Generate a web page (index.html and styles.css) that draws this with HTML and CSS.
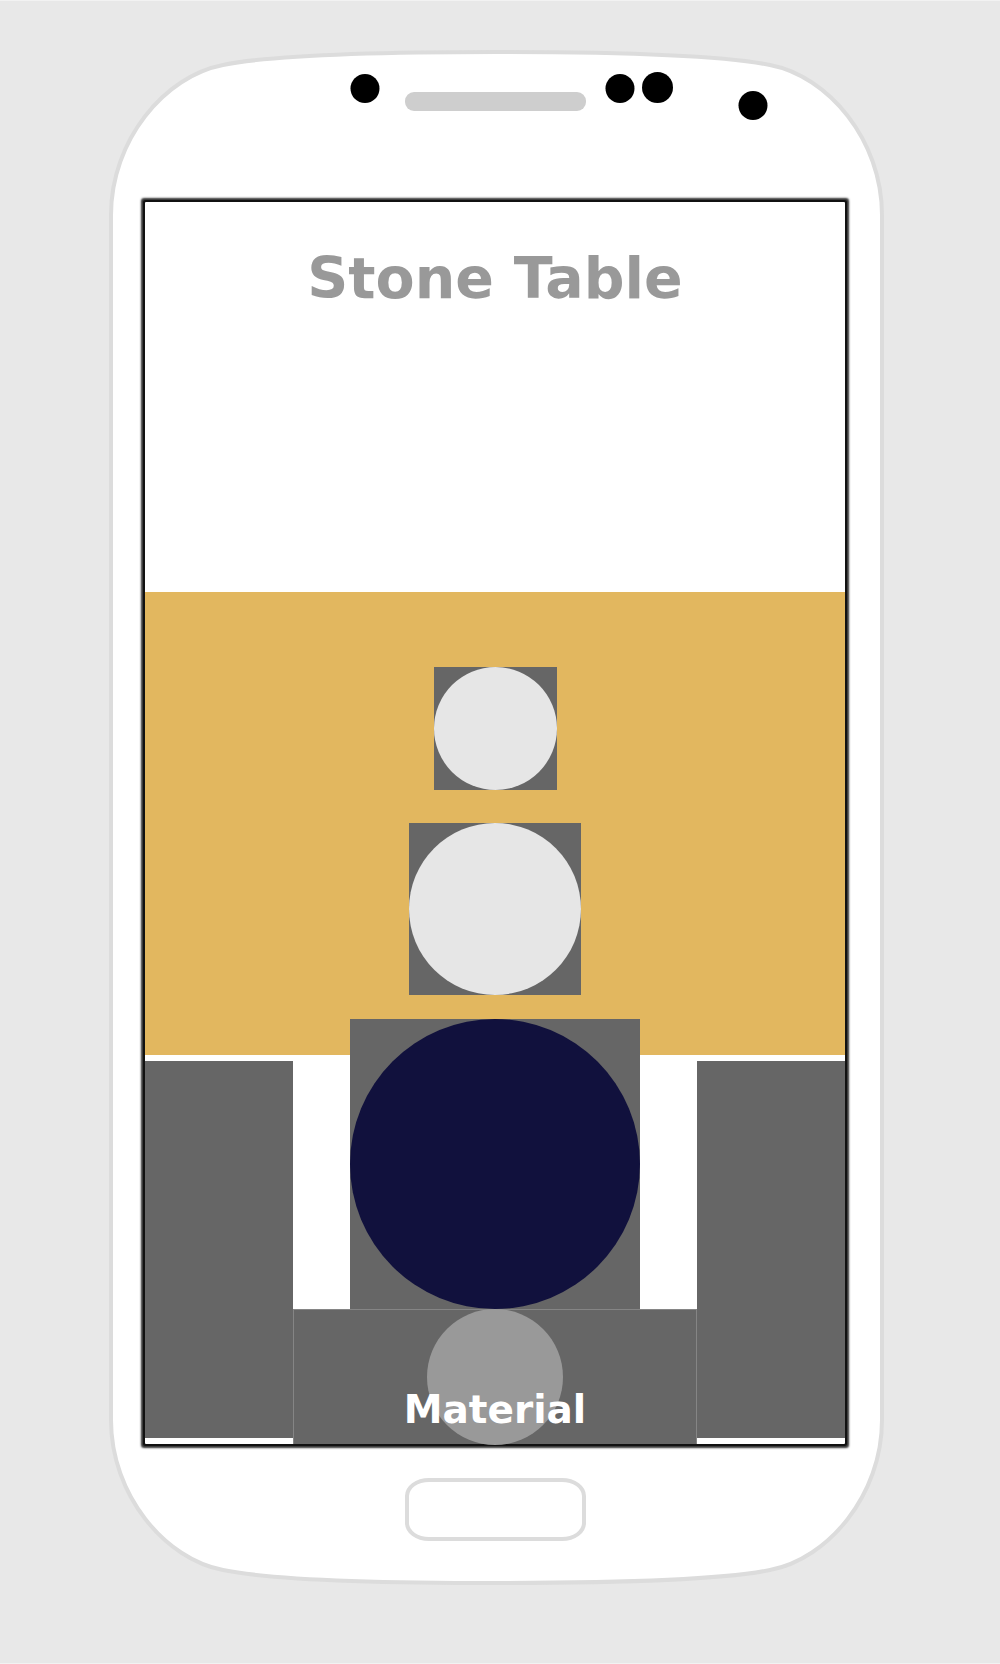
FILE: index.html
```html
<!DOCTYPE html>
<html lang="en">
<head>
  <meta charset="utf-8">
  <meta name="viewport" content="width=device-width, initial-scale=1">
  <title>Stone Table</title>
  <link rel="stylesheet" href="styles.css">
</head>
<body>
  <div class="phone">
    <svg class="shell" viewBox="109 50 775 1535" preserveAspectRatio="none" aria-hidden="true">
      <path d="M111 215C111 140 165 76 223 65C262 57 350 52 496 52S731 57 770 65C828 76 882 140 882 215V1420C882 1495 828 1559 770 1570C731 1578 643 1583 496 1583S262 1578 223 1570C165 1559 111 1495 111 1420Z" fill="#fff" stroke="#dcdcdc" stroke-width="4"/>
      <rect x="405" y="92" width="181" height="19" rx="9" fill="#cecece"/>
      <circle cx="365" cy="88.500" r="14.500"/>
      <circle cx="620" cy="88.500" r="14.500"/>
      <circle cx="657.500" cy="87.500" r="15.500"/>
      <circle cx="753" cy="105.500" r="14.500"/>
    </svg>

    <main class="screen">
      <header class="heading">
        <h1 class="title">Stone Table</h1>
      </header>
      <section class="wall">
        <div class="tile tile-small"></div>
        <div class="tile tile-medium"></div>
      </section>
      <section class="table">
        <div class="leg"></div>
        <div class="middle">
          <div class="tile tile-large"></div>
          <div class="base">
            <div class="knob"></div>
            <p class="label">Material</p>
          </div>
        </div>
        <div class="leg"></div>
      </section>
    </main>

    <button class="home" type="button" aria-label="Home"></button>
  </div>
</body>
</html>
```
FILE: styles.css
```css
* {
  box-sizing: border-box;
}

body {
  margin: 0;
  padding: 49px 116px 78px 109px;
  border: solid #f2f2f2;
  border-width: 1px 0;
  background: #e8e8e8;
  font-family: "DejaVu Sans", sans-serif;
  font-weight: bold;
}

.phone {
  position: relative;
  display: flex;
  flex-direction: column;
  padding: 152px 39px 44px 36px;
}

.shell {
  position: absolute;
  inset: 0;
  width: 100%;
  height: 100%;
}

/* The bezel is drawn as shadows, so it takes no room in the layout. */
.screen {
  position: relative;
  background: #fff;
  border-radius: 1px;
  box-shadow: 0 0 0 2px #111, 0 0 2px 4px #333;
}

.heading {
  height: 390px;
  padding-top: 44px;
}

.title {
  margin: 0;
  color: #999;
  font-size: 57px;
  line-height: 64px;
  text-align: center;
}

.wall {
  display: flex;
  flex-direction: column;
  align-items: center;
  gap: 33px;
  height: 463px;
  padding-top: 75px;
  background: #e2b75f;
}

.tile {
  flex: none;
  background: #666;
}

.tile::before {
  content: "";
  display: block;
  height: 100%;
  border-radius: 50%;
  background: #e6e6e6;
}

.tile-small {
  width: 123px;
  height: 123px;
}

.tile-medium {
  width: 172px;
  height: 172px;
}

.tile-large {
  width: 290px;
  height: 290px;
  margin-top: -36px;
}

.tile-large::before {
  background: #11113d;
}

.table {
  display: grid;
  grid-template-columns: 148px 1fr 148px;
}

.leg {
  margin: 6px 0;
  background: #666;
}

.middle {
  display: flex;
  flex-direction: column;
  align-items: center;
}

.base {
  position: relative;
  display: flex;
  justify-content: center;
  align-items: flex-end;
  width: 100%;
  height: 135px;
  padding-bottom: 10px;
  border: 1px solid #858585;
  border-bottom: 0;
  background: #666;
}

.knob {
  position: absolute;
  top: -1px;
  left: 50%;
  width: 136px;
  height: 136px;
  border-radius: 50%;
  background: #999;
  transform: translateX(-50%);
}

.label {
  position: relative;
  margin: 0;
  color: #fff;
  font-size: 39px;
  line-height: 48px;
}

.home {
  position: relative;
  align-self: center;
  width: 181px;
  height: 63px;
  margin-top: 34px;
  border: 4px solid #dcdcdc;
  border-radius: 24px / 18px;
  background: #fff;
}
```
